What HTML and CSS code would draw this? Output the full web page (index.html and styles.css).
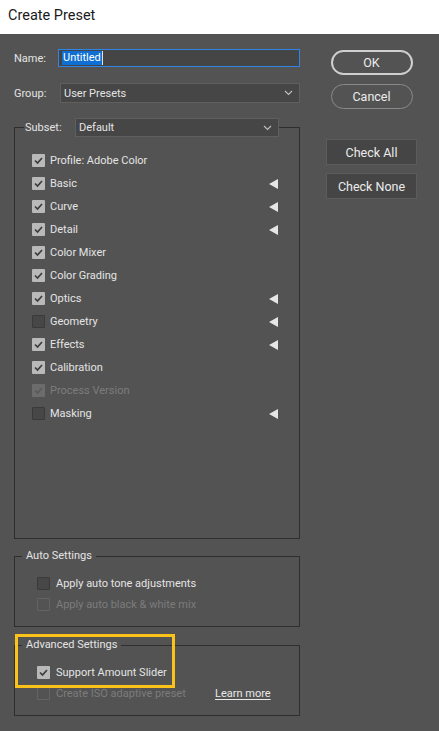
FILE: index.html
```html
<!DOCTYPE html>
<html>
<head>
<meta charset="utf-8">
<title>Create Preset</title>
<link rel="stylesheet" href="styles.css">
</head>
<body>
<div class="titlebar">Create Preset</div>
<div class="dialog">
  <div class="main">
    <div class="row name-row">
      <span class="lbl">Name:</span>
      <div class="input"><span class="sel">Untitled</span><span class="caret"></span></div>
    </div>
    <div class="row group-row">
      <span class="lbl">Group:</span>
      <div class="select group-select"><span>User Presets</span><svg class="chev" width="9" height="6" viewBox="0 0 9 6"><polyline points="1,1 4.5,4.5 8,1" fill="none" stroke="#bdbdbd" stroke-width="1.2"/></svg></div>
    </div>

    <fieldset class="box subset">
      <legend class="subset-legend">
        <span class="lbl">Subset:</span>
        <div class="select subset-select"><span>Default</span><svg class="chev" width="9" height="6" viewBox="0 0 9 6"><polyline points="1,1 4.5,4.5 8,1" fill="none" stroke="#bdbdbd" stroke-width="1.2"/></svg></div>
      </legend>
      <ul class="list">
        <li class="item"><span class="cb on"><svg viewBox="0 0 13 13"><polyline points="3,6.5 5.5,9 10,4" fill="none" stroke="#3c3c3c" stroke-width="1.7"/></svg></span><span class="txt">Profile: Adobe Color</span></li>
        <li class="item"><span class="cb on"><svg viewBox="0 0 13 13"><polyline points="3,6.5 5.5,9 10,4" fill="none" stroke="#3c3c3c" stroke-width="1.7"/></svg></span><span class="txt">Basic</span><span class="tri"></span></li>
        <li class="item"><span class="cb on"><svg viewBox="0 0 13 13"><polyline points="3,6.5 5.5,9 10,4" fill="none" stroke="#3c3c3c" stroke-width="1.7"/></svg></span><span class="txt">Curve</span><span class="tri"></span></li>
        <li class="item"><span class="cb on"><svg viewBox="0 0 13 13"><polyline points="3,6.5 5.5,9 10,4" fill="none" stroke="#3c3c3c" stroke-width="1.7"/></svg></span><span class="txt">Detail</span><span class="tri"></span></li>
        <li class="item"><span class="cb on"><svg viewBox="0 0 13 13"><polyline points="3,6.5 5.5,9 10,4" fill="none" stroke="#3c3c3c" stroke-width="1.7"/></svg></span><span class="txt">Color Mixer</span></li>
        <li class="item"><span class="cb on"><svg viewBox="0 0 13 13"><polyline points="3,6.5 5.5,9 10,4" fill="none" stroke="#3c3c3c" stroke-width="1.7"/></svg></span><span class="txt">Color Grading</span></li>
        <li class="item"><span class="cb on"><svg viewBox="0 0 13 13"><polyline points="3,6.5 5.5,9 10,4" fill="none" stroke="#3c3c3c" stroke-width="1.7"/></svg></span><span class="txt">Optics</span><span class="tri"></span></li>
        <li class="item"><span class="cb off"></span><span class="txt">Geometry</span><span class="tri"></span></li>
        <li class="item"><span class="cb on"><svg viewBox="0 0 13 13"><polyline points="3,6.5 5.5,9 10,4" fill="none" stroke="#3c3c3c" stroke-width="1.7"/></svg></span><span class="txt">Effects</span><span class="tri"></span></li>
        <li class="item"><span class="cb on"><svg viewBox="0 0 13 13"><polyline points="3,6.5 5.5,9 10,4" fill="none" stroke="#3c3c3c" stroke-width="1.7"/></svg></span><span class="txt">Calibration</span></li>
        <li class="item disabled"><span class="cb on-dis"><svg viewBox="0 0 13 13"><polyline points="3,6.5 5.5,9 10,4" fill="none" stroke="#5a5a5a" stroke-width="1.7"/></svg></span><span class="txt">Process Version</span></li>
        <li class="item"><span class="cb off"></span><span class="txt">Masking</span><span class="tri"></span></li>
      </ul>
    </fieldset>

    <fieldset class="box small auto">
      <legend class="text-legend">Auto Settings</legend>
      <ul class="list small-list">
        <li class="item"><span class="cb off"></span><span class="txt">Apply auto tone adjustments</span></li>
        <li class="item disabled"><span class="cb off-dis"></span><span class="txt">Apply auto black &amp; white mix</span></li>
      </ul>
    </fieldset>

    <fieldset class="box small adv">
      <legend class="text-legend">Advanced Settings</legend>
      <ul class="list small-list">
        <li class="item"><span class="cb on"><svg viewBox="0 0 13 13"><polyline points="3,6.5 5.5,9 10,4" fill="none" stroke="#3c3c3c" stroke-width="1.7"/></svg></span><span class="txt">Support Amount Slider</span></li>
        <li class="item disabled"><span class="cb off-dis"></span><span class="txt iso">Create ISO adaptive preset</span><a class="learn">Learn more</a></li>
      </ul>
    </fieldset>
  </div>

  <div class="side">
    <button class="pill ok">OK</button>
    <button class="pill cancel">Cancel</button>
    <button class="rect check-all">Check All</button>
    <button class="rect check-none">Check None</button>
  </div>

  <div class="highlight"></div>
</div>
</body>
</html>
```
FILE: styles.css
```css
* { box-sizing: border-box; }
html, body { margin: 0; padding: 0; }
body {
  width: 439px;
  height: 731px;
  overflow: hidden;
  font-family: Roboto, "Noto Sans", sans-serif;
  font-size: 11px;
  color: #e4e4e4;
  background: #535353;
}
.titlebar {
  height: 34px;
  background: #ffffff;
  color: #1a1a1a;
  font-size: 14.5px;
  line-height: 32px;
  padding-left: 8px;
}
.dialog {
  position: relative;
  height: 697px;
  background: #535353;
  display: flex;
  padding-left: 14px;
}
.main {
  width: 286px;
  display: flex;
  flex-direction: column;
}
.row {
  display: flex;
  align-items: center;
}
.name-row { margin-top: 15px; height: 18px; }
.group-row { margin-top: 16px; height: 20px; }
.lbl { color: #e4e4e4; white-space: nowrap; }
.name-row .lbl { width: 44px; }
.group-row .lbl { width: 46px; }
.input {
  flex: 1;
  height: 18px;
  background: #454545;
  border: 1px solid #2f86e6;
  display: flex;
  align-items: center;
  padding-left: 3px;
}
.input .sel {
  background: #0f6fd2;
  color: #ffffff;
  line-height: 14px;
  padding: 0 1px;
}
.input .caret {
  width: 1px;
  height: 14px;
  background: #e0e0e0;
}
.select {
  height: 20px;
  background: #464646;
  border: 1px solid #5f5f5f;
  display: flex;
  align-items: center;
  justify-content: space-between;
  padding: 0 6px 0 3px;
  color: #e4e4e4;
}
.group-select { flex: 1; }
.chev { display: block; }

.box {
  margin: 0;
  padding: 0;
  min-width: 0;
  border: 1px solid #2e2e2e;
}
.subset {
  margin-top: 15px;
  padding-bottom: 113px;
}
.subset-legend {
  display: flex;
  align-items: center;
  width: 255px;
  margin-left: 9px;
  padding: 0 0 0 1px;
}
.subset-legend .lbl { width: 50px; }
.subset-select { flex: 1; height: 19px; padding-left: 3px; }

.list {
  list-style: none;
  margin: 0;
  padding: 0;
}
.subset .list { padding: 12px 0 0 17px; }
.item {
  height: 23px;
  display: flex;
  align-items: center;
}
.cb {
  width: 13px;
  height: 13px;
  flex: none;
  margin-right: 5px;
  border-radius: 1px;
}
.cb svg { display: block; width: 13px; height: 13px; }
.cb.on { background: #b9b9b9; }
.cb.on-dis { background: #6c6c6c; }
.cb.off { background: #474747; border: 1px solid #3a3a3a; }
.cb.off-dis { background: #535353; border: 1px solid #646464; }
.txt { white-space: nowrap; }
.disabled .txt { color: #7c7c7c; }
.tri {
  margin-left: auto;
  margin-right: 21px;
  width: 0;
  height: 0;
  border-top: 5px solid transparent;
  border-bottom: 5px solid transparent;
  border-right: 9px solid #e6e6e6;
}

.small { padding-bottom: 11px; }
.auto { margin-top: 9px; }
.adv { margin-top: 10px; }
.text-legend {
  margin-left: 7px;
  padding: 0 4px;
  line-height: 16px;
  color: #e4e4e4;
}
.small-list { padding: 9px 0 0 22px; }
.small-list .item { height: 21px; }
.small-list .cb { margin-right: 6px; }
.iso { width: 159px; }
.learn {
  color: #e8e8e8;
  text-decoration: underline;
  text-underline-offset: 2px;
}

.side {
  width: 91px;
  margin-left: 26px;
  display: flex;
  flex-direction: column;
  align-items: center;
  padding-top: 16px;
}
button {
  font-family: inherit;
  font-size: 12.5px;
  color: #ececec;
  margin: 0;
  padding: 0;
  cursor: default;
}
.pill {
  width: 82px;
  height: 25px;
  border-radius: 13px;
  background: #535353;
}
.ok { border: 2px solid #cfcfcf; }
.cancel { border: 1px solid #8a8a8a; margin-top: 9px; }
.rect {
  width: 91px;
  height: 26px;
  background: #454545;
  border: 1px solid #5c5c5c;
  border-radius: 0;
}
.check-all { margin-top: 30px; }
.check-none { margin-top: 8px; }

.highlight {
  position: absolute;
  left: 15px;
  top: 600px;
  width: 160px;
  height: 54px;
  border: 3px solid #fbc31a;
  pointer-events: none;
}
```
